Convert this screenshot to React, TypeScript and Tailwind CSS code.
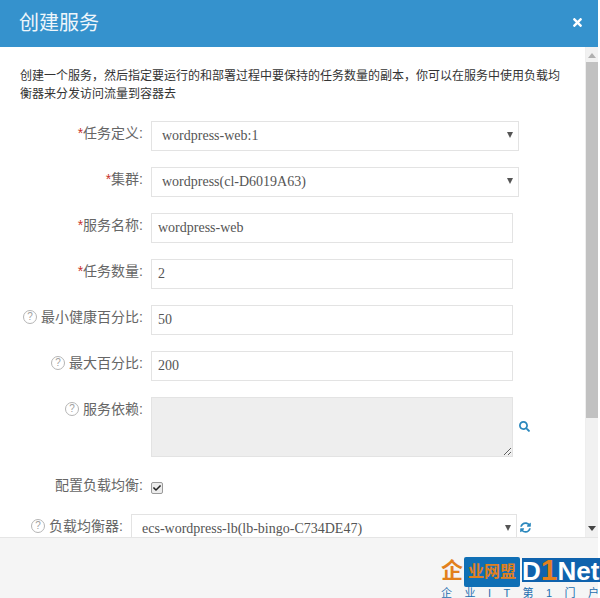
import { FaCheck, FaSearch, FaSyncAlt, FaTimes } from "react-icons/fa";

const cjk = "font-['Liberation_Sans','Noto_Sans_CJK_SC',sans-serif]";
const serif = "font-['Liberation_Serif','Noto_Sans_CJK_SC',serif]";

function Help() {
  return (
    <span className="mr-[4px] flex h-[14px] w-[14px] items-center justify-center rounded-full border border-[#b5b5b5] text-[10px] leading-none text-[#a0a0a0]">?</span>
  );
}

function Label({ text, req, help, width = "w-[143px]" }: { text: string; req?: boolean; help?: boolean; width?: string }) {
  return (
    <div className={`flex ${width} shrink-0 items-center justify-end pb-[7px] text-[14px] leading-[20px] text-[#666] ${cjk}`}>
      {help && <Help />}
      {req && <span className="text-[#c9302c]">*</span>}
      <span>{text}:</span>
    </div>
  );
}

function Select({ value, width }: { value: string; width: string }) {
  return (
    <div className={`relative h-[30px] ${width} shrink-0`}>
      <select
        defaultValue={value}
        className={`h-full w-full appearance-none border border-[#e3e3e3] bg-white pb-[2px] pl-[10px] text-[14px] text-[#555] outline-none ${serif}`}
      >
        <option>{value}</option>
      </select>
      <span className="absolute right-[6px] top-[11px] h-0 w-0 border-x-[3px] border-t-[6px] border-x-transparent border-t-[#555]" />
    </div>
  );
}

function Field({ value }: { value: string }) {
  return (
    <input
      readOnly
      value={value}
      className={`h-[30px] w-[362px] border border-[#e3e3e3] bg-white px-[6px] pb-[1px] text-[14px] text-[#555] outline-none ${serif}`}
    />
  );
}

export default function App() {
  return (
    <div className="h-[598px] w-[600px] overflow-hidden bg-white">
      <div className={`flex h-full w-[598px] flex-col ${cjk}`}>
        <header className="flex h-[47px] shrink-0 items-center justify-between bg-[#3592cd] pl-[19px] pr-[14px]">
          <h1 className="text-[20px] font-normal leading-[47px] text-[#eef6fb]">创建服务</h1>
          <FaTimes className="mt-[-3px] text-[13px] text-white" />
        </header>

        <div className="flex min-h-0 flex-1">
          <main className="min-w-0 flex-1 overflow-hidden pl-[20px] pt-[21px]">
            <p className="w-[545px] text-[12px] leading-[17.5px] text-[#333]">
              创建一个服务，然后指定要运行的和部署过程中要保持的任务数量的副本，你可以在服务中使用负载均衡器来分发访问流量到容器去
            </p>
            <div className="ml-[-20px] mt-[18px] flex flex-col gap-[16px]">
              <div className="flex items-center gap-[8px]">
                <Label text="任务定义" req />
                <Select value="wordpress-web:1" width="w-[368px]" />
              </div>
              <div className="flex items-center gap-[8px]">
                <Label text="集群" req />
                <Select value="wordpress(cl-D6019A63)" width="w-[368px]" />
              </div>
              <div className="flex items-center gap-[8px]">
                <Label text="服务名称" req />
                <Field value="wordpress-web" />
              </div>
              <div className="flex items-center gap-[8px]">
                <Label text="任务数量" req />
                <Field value="2" />
              </div>
              <div className="flex items-center gap-[8px]">
                <Label text="最小健康百分比" help />
                <Field value="50" />
              </div>
              <div className="flex items-center gap-[8px]">
                <Label text="最大百分比" help />
                <Field value="200" />
              </div>
              <div className="flex items-start gap-[8px]">
                <div className="pt-[2px]">
                  <Label text="服务依赖" help />
                </div>
                <textarea readOnly className="h-[60px] w-[362px] border border-[#e3e3e3] bg-[#eeeeee] outline-none" />
                <FaSearch className="ml-[-2px] mt-[24px] text-[11px] text-[#2b88bd]" />
              </div>
              <div className="mt-[3px] flex h-[24px] items-center gap-[8px]">
                <Label text="配置负载均衡" />
                <span className="relative flex h-[12px] w-[12px] items-center justify-center">
                  <input
                    type="checkbox"
                    readOnly
                    checked
                    className="h-[12px] w-[12px] appearance-none rounded-[2px] border border-[#9a9a9a] bg-[#ececec]"
                  />
                  <FaCheck className="absolute left-[2px] top-[2px] text-[8px] text-[#222]" />
                </span>
              </div>
              <div className="mt-[-2px] flex items-center gap-[8px]">
                <Label text="负载均衡器" help width="w-[123px]" />
                <Select value="ecs-wordpress-lb(lb-bingo-C734DE47)" width="w-[386px]" />
                <FaSyncAlt className="ml-[-5px] mt-[-4px] text-[11px] text-[#2b88bd]" />
              </div>
            </div>
          </main>

          <aside className="flex w-[13px] shrink-0 flex-col items-center border-l border-[#eeeeee] bg-[#f1f1f1]">
            <span className="mt-[6px] h-0 w-0 border-x-[4px] border-b-[5px] border-x-transparent border-b-[#b0b0b0]" />
            <div className="mt-[4px] h-[356px] w-full bg-[#c1c1c1]" />
            <span className="mt-[108px] h-0 w-0 border-x-[4px] border-t-[5px] border-x-transparent border-t-[#444]" />
          </aside>
        </div>

        <footer className="relative h-[61px] shrink-0 border-t border-[#e5e5e5] bg-[#f5f5f5]">
          <div className="absolute left-[441px] top-[16px] w-[159px]">
            <div className="flex h-[33px] items-start">
              <span className="mt-[6px] w-[23px] text-[22px] font-bold leading-none text-[#e2801c]">企</span>
              <span className="mt-[3px] flex h-[30px] w-[56px] items-center justify-center rounded-[2px] bg-[#0f6fb5] text-[16px] font-bold leading-none text-[#e2801c]">
                业网盟
              </span>
              <span className="ml-[2px] mt-[4px] h-[24px] w-[78px] whitespace-nowrap bg-[#0f62ad] text-[26px] font-bold leading-[24px] text-white">
                D<span className="text-[30px] text-[#e2801c]">1</span>Net
              </span>
            </div>
            <div className="flex justify-between whitespace-nowrap pr-[1px] text-[11px] leading-[13px] text-[#1d6fb0]">
              <span>企</span>
              <span>业</span>
              <span>I</span>
              <span>T</span>
              <span>第</span>
              <span>1</span>
              <span>门</span>
              <span>户</span>
            </div>
          </div>
        </footer>
      </div>
    </div>
  );
}
